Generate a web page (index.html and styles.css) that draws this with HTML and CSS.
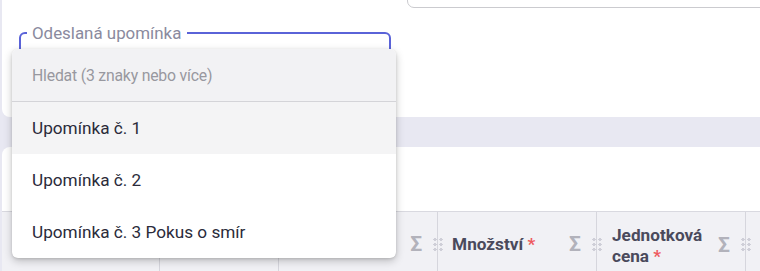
FILE: index.html
```html
<!DOCTYPE html>
<html lang="cs">
<head>
<meta charset="utf-8">
<link rel="stylesheet" href="styles.css">
</head>
<body>
<div class="page">
  <div class="card card-top">
    <div class="toprow"><div class="topinput"></div></div>
    <fieldset class="field">
      <legend class="field-label">Odeslaná upomínka</legend>
      <div class="field-body"></div>
    </fieldset>
  </div>
  <div class="gap"></div>
  <div class="card card-table">
    <div class="toolbar"></div>
    <div class="thead">
      <div class="th c1"></div>
      <div class="th c2"></div>
      <div class="th c3"><span class="sigma">Σ</span><span class="grip"></span></div>
      <div class="th c4"><span class="title">Množství <span class="req">*</span></span><span class="sigma">Σ</span><span class="grip"></span></div>
      <div class="th c5"><span class="title">Jednotková<br>cena <span class="req">*</span></span><span class="sigma">Σ</span><span class="grip"></span></div>
      <div class="th c6"></div>
    </div>
  </div>
</div>
<div class="dropdown">
  <div class="dd-search">Hledat (3 znaky nebo více)</div>
  <div class="dd-item active">Upomínka č. 1</div>
  <div class="dd-item">Upomínka č. 2</div>
  <div class="dd-item">Upomínka č. 3 Pokus o smír</div>
</div>
</body>
</html>
```
FILE: styles.css
```css
* { box-sizing: border-box; }
html, body { margin: 0; padding: 0; }
body {
  width: 760px;
  height: 271px;
  overflow: hidden;
  background: #e8e8f2;
  font-family: Roboto, "Liberation Sans", sans-serif;
  position: relative;
}
.page { display: flex; flex-direction: column; padding-left: 2px; }
.card { background: #fff; }
.card-top {
  height: 117px;
  border-radius: 0 0 0 8px;
  display: flex;
  flex-direction: column;
}
.toprow { display: flex; justify-content: flex-end; height: 8px; }
.topinput {
  width: 370px;
  height: 40px;
  margin-top: -32px;
  margin-right: -17px;
  border: 1px solid #cbcbcf;
  border-radius: 7px;
  background: #fff;
}
.field {
  margin: 15px 0 0 17px;
  width: 372px;
  height: 66px;
  border: 2px solid #5a63d8;
  border-radius: 6px;
  padding: 0 0 0 6px;
}
.field-label {
  padding: 0 6px 0 5px;
  font-size: 16.9px;
  line-height: 20px;
  color: #8a8a9e;
}
.gap { height: 30px; }
.card-table {
  height: 124px;
  border-radius: 8px 0 0 0;
  display: flex;
  flex-direction: column;
}
.toolbar { height: 64px; }
.thead {
  flex: 1;
  display: flex;
  background: #f1f1f5;
  border-top: 1px solid #d9d9e0;
}
.th {
  position: relative;
  display: flex;
  align-items: flex-start;
  padding-top: 22px;
  padding-left: 14px;
  border-left: 1px solid #d6d6dd;
}
.th.c1 { width: 158px; border-left: none; }
.th.c2 { width: 120px; }
.th.c3 { width: 160px; }
.th.c4 { width: 160px; }
.th.c5 { width: 150px; padding-top: 13px; padding-left: 15px; }
.th.c6 { flex: 1; }
.title {
  font-weight: 700;
  font-size: 17.2px;
  line-height: 21px;
  color: #4a4a5c;
}
.req { color: #ee5a5f; }
.sigma {
  margin-left: auto;
  margin-right: 15px;
  font-weight: 700;
  font-size: 21px;
  line-height: 22px;
  color: #b2b2bb;
}
.c3 .sigma, .c4 .sigma { margin-top: -1px; }
.c5 .sigma { margin-top: 9px; margin-right: 15px; }
.grip {
  position: absolute;
  right: -6px;
  top: 25px;
  width: 11px;
  height: 15px;
  background-image: radial-gradient(circle, #cfcfd8 1.6px, transparent 1.8px);
  background-size: 6px 5px;
  background-position: 0 0;
  z-index: 1;
}
.dropdown {
  position: absolute;
  left: 12px;
  top: 49px;
  width: 384px;
  height: 209px;
  background: #fff;
  border-radius: 6px;
  overflow: hidden;
  box-shadow: 0 3px 9px rgba(0,0,0,0.22), 0 1px 3px rgba(0,0,0,0.12);
  z-index: 5;
}
.dd-search {
  height: 53px;
  padding-left: 20px;
  display: flex;
  align-items: center;
  background: #f2f2f4;
  border-bottom: 1px solid #d4d4d8;
  font-size: 15.8px;
  letter-spacing: -0.2px;
  color: #98989f;
}
.dd-item {
  height: 52px;
  padding-left: 20px;
  display: flex;
  align-items: center;
  font-size: 17.2px;
  color: #2b2b3a;
}
.dd-item.active { background: #f4f4f5; }
```
